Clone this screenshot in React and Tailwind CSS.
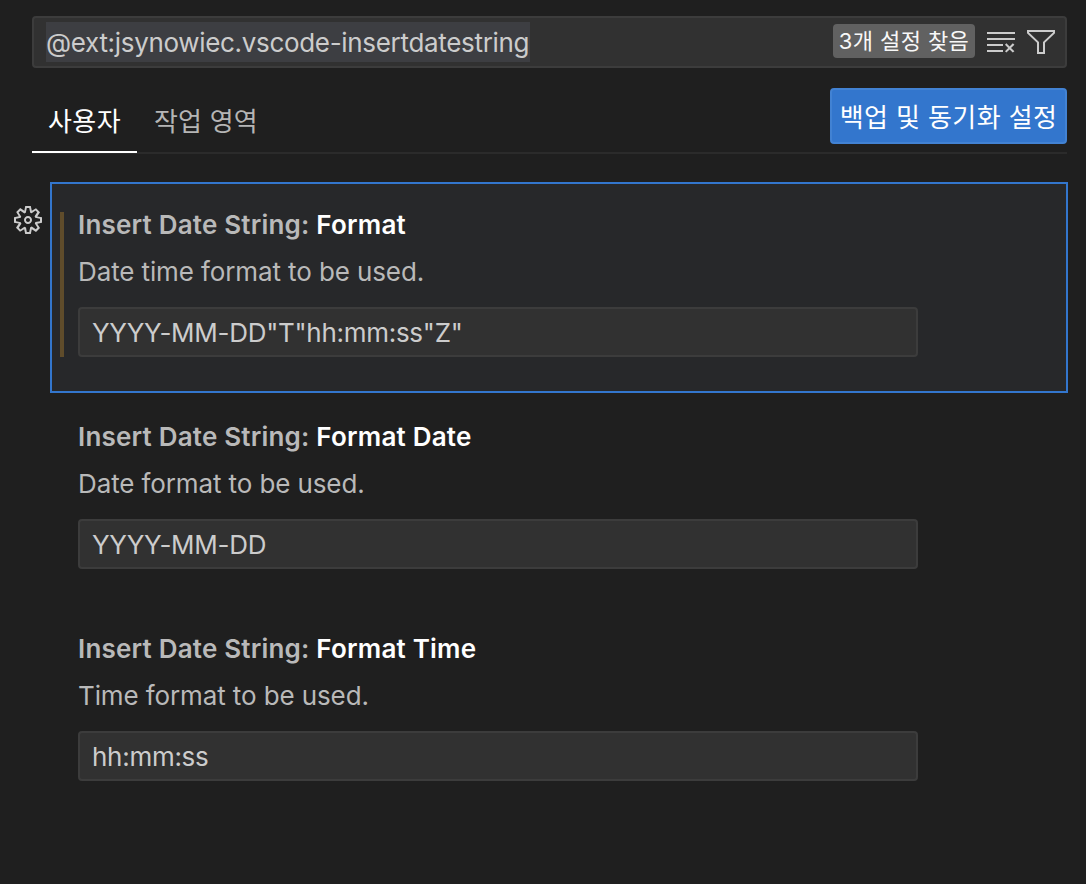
import { VscClearAll, VscFilter, VscGear } from "react-icons/vsc";

const settings = [
  {
    name: "Format",
    description: "Date time format to be used.",
    value: 'YYYY-MM-DD"T"hh:mm:ss"Z"',
    focused: true,
  },
  { name: "Format Date", description: "Date format to be used.", value: "YYYY-MM-DD" },
  { name: "Format Time", description: "Time format to be used.", value: "hh:mm:ss" },
];

function SearchBar() {
  return (
    <div className="flex h-[52px] items-center rounded-[4px] border-2 border-[#3c3c3c] bg-[#313131] pl-3 pr-2">
      <span className="h-10 w-[484px] whitespace-nowrap bg-[#3d3e42] text-[26px] leading-[42px] tracking-[-0.32px] text-[#cccccc]">
        @ext:jsynowiec.vscode-insertdatestring
      </span>
      <span className="mb-[2px] ml-auto h-[34px] w-[142px] whitespace-nowrap rounded-[4px] bg-[#616161] text-center text-[22px] leading-[35px] tracking-[0.4px] text-[#f8f8f8]">
        3개 설정 찾음
      </span>
      <VscClearAll className="ml-[10px] size-8 text-[#cccccc]" />
      <VscFilter className="ml-2 size-8 text-[#cccccc]" />
    </div>
  );
}

function Tabs() {
  return (
    <div className="mt-5 flex h-[66px] items-start border-b-2 border-[#2b2b2b] text-[26px] tracking-[0.4px]">
      <button className="h-[65px] w-[105px] whitespace-nowrap border-b-2 border-white pt-[1px] leading-[66px] text-white">
        사용자
      </button>
      <button className="ml-[17px] h-[65px] whitespace-nowrap pt-[1px] leading-[66px] tracking-[0.2px] text-[#b5b5b5]">
        작업 영역
      </button>
      <button className="ml-auto h-14 w-[237px] whitespace-nowrap rounded-[4px] border-2 border-[#4282d3] bg-[#3376cd] leading-[56px] text-white">
        백업 및 동기화 설정
      </button>
    </div>
  );
}

function Setting({ name, description, value, focused }) {
  return (
    <section
      className={
        focused
          ? "mb-px flex h-[211px] border-2 border-[#3376cd] bg-[#27282a] pl-2 pt-7"
          : "flex h-[212px] border-2 border-transparent pl-2 pt-7"
      }
    >
      <div className={focused ? "h-[145px] w-1 bg-[#5f4c2b]" : "h-[145px] w-1"} />
      <div className="ml-[14px] w-[840px]">
        <h2 className="h-[26px] whitespace-nowrap text-[26px] font-semibold leading-[26px] tracking-[0.2px] text-[#b9b9b9]">
          Insert Date String: <span className="text-white">{name}</span>
        </h2>
        <p className="mt-5 h-[28px] whitespace-nowrap text-[26px] leading-[28px] tracking-[-0.11px] text-[#b9b9b9]">
          {description}
        </p>
        <div className="mt-[21px] h-[50px] rounded-[4px] border-2 border-[#3c3c3c] bg-[#313131] pl-3 text-[26px] leading-[48px] tracking-[-0.28px] text-[#cccccc]">
          {value}
        </div>
      </div>
    </section>
  );
}

export default function App() {
  return (
    <main className="h-[884px] w-[1086px] overflow-hidden bg-[#1f1f1f] pt-4 font-['Inter','Noto_Sans_CJK_KR',sans-serif]">
      <header className="ml-8 w-[1035px]">
        <SearchBar />
        <Tabs />
      </header>
      <div className="mt-7 flex">
        <div className="w-[50px] pl-3 pt-[22px]">
          <VscGear className="size-8 text-[#cccccc]" />
        </div>
        <div className="w-[1018px]">
          {settings.map((s) => (
            <Setting key={s.name} {...s} />
          ))}
        </div>
      </div>
    </main>
  );
}
